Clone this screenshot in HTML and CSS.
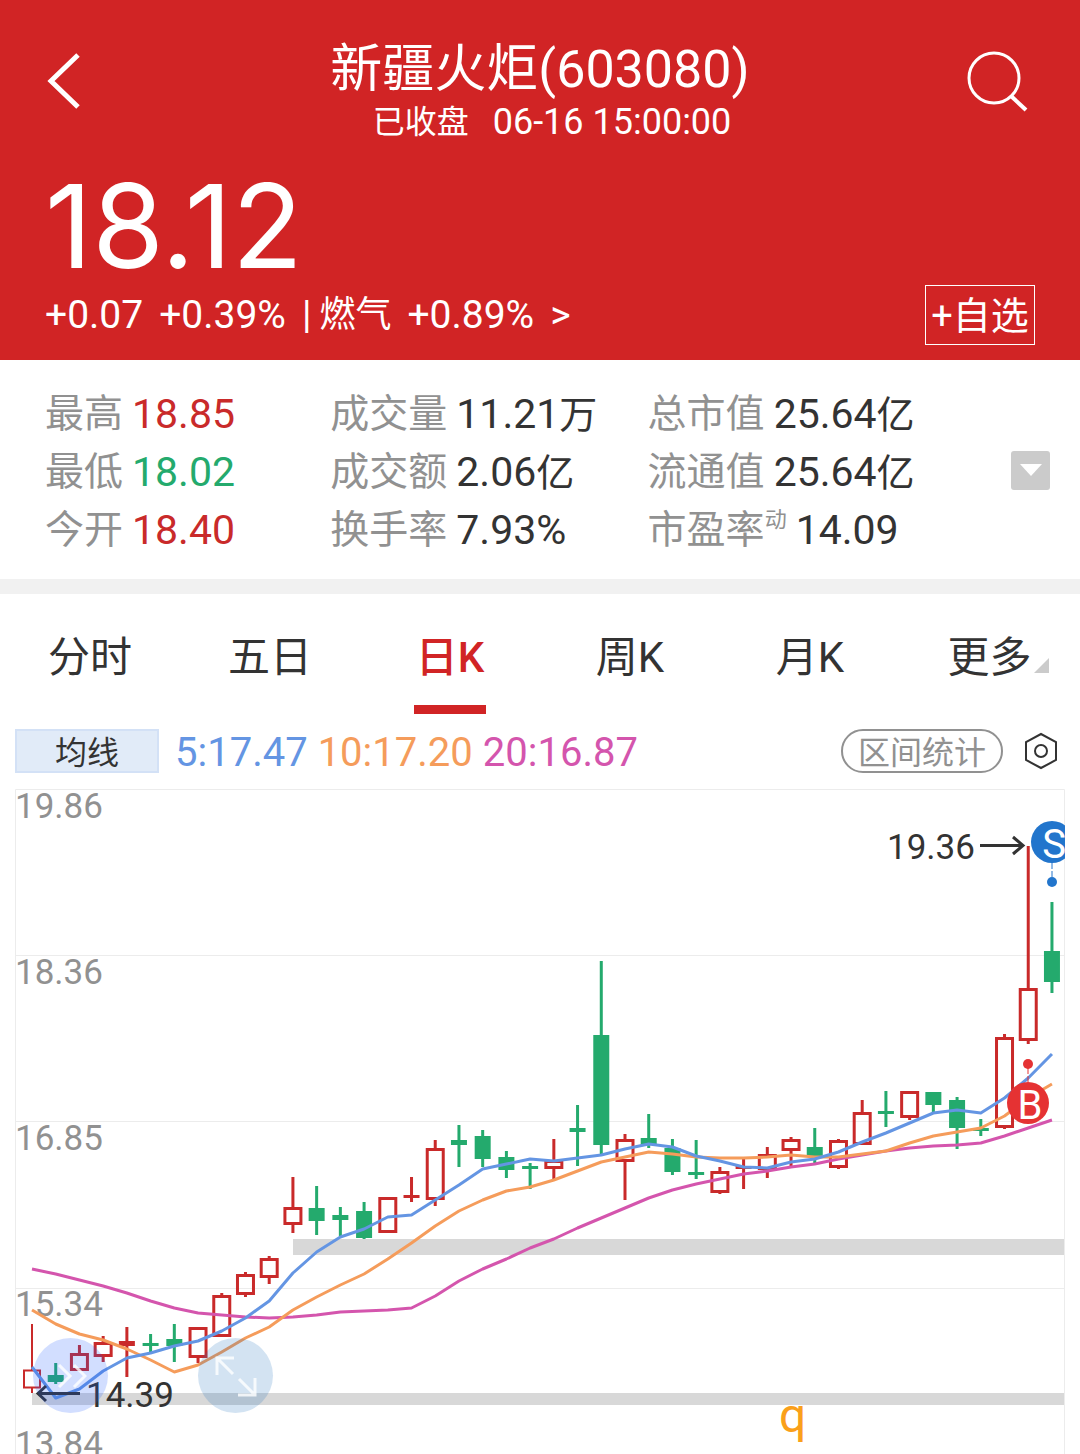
FILE: index.html
```html
<!DOCTYPE html>
<html lang="zh-CN">
<head>
    <meta charset="UTF-8">
    <meta name="viewport" content="width=device-width, initial-scale=1.0">
    <title>新疆火炬(603080)</title>
    <link rel="stylesheet" href="styles.css">
</head>
<body>

    <header class="quote-header">
        <div class="top-bar">
            <button class="icon-btn back-btn" aria-label="返回">
                <svg width="34" height="58" viewBox="0 0 34 58"><path d="M31 3 L4 29 L31 55" fill="none" stroke="#fff" stroke-width="5"/></svg>
            </button>
            <div class="title">
                <h1>新疆火炬(603080)</h1>
                <p><span>已收盘</span><span class="time">06-16 15:00:00</span></p>
            </div>
            <button class="icon-btn search-btn" aria-label="搜索">
                <svg width="62" height="62" viewBox="0 0 62 62"><g fill="none" stroke="#fff" stroke-width="3"><circle cx="27" cy="28" r="25"/><path d="M44 46 L59 60" stroke-width="4"/></g></svg>
            </button>
        </div>
        <div class="price">18.12</div>
        <div class="change-row">
            <span>+0.07</span>
            <span>+0.39%</span>
            <a class="sector" href="#"><span class="bar">|</span><span class="cn">燃气</span><span>+0.89%</span><span>&gt;</span></a>
            <button class="add-btn"><span>+</span>自选</button>
        </div>
    </header>

    <section class="stats">
        <dl class="stats-grid">
            <div><dt>最高</dt><dd class="up">18.85</dd></div>
            <div><dt>成交量</dt><dd>11.21<small>万</small></dd></div>
            <div><dt>总市值</dt><dd>25.64<small>亿</small></dd></div>
            <div><dt>最低</dt><dd class="down">18.02</dd></div>
            <div><dt>成交额</dt><dd>2.06<small>亿</small></dd></div>
            <div><dt>流通值</dt><dd>25.64<small>亿</small></dd></div>
            <div><dt>今开</dt><dd class="up">18.40</dd></div>
            <div><dt>换手率</dt><dd>7.93%</dd></div>
            <div><dt>市盈率<sup>动</sup></dt><dd>14.09</dd></div>
        </dl>
        <button class="expand-btn" aria-label="展开">
            <svg width="22" height="12" viewBox="0 0 22 12"><path d="M0 0 H22 L11 12 Z" fill="#fff"/></svg>
        </button>
    </section>

    <nav class="tabs">
        <button>分时</button>
        <button>五日</button>
        <button class="active">日K</button>
        <button>周K</button>
        <button>月K</button>
        <button class="more">更多</button>
    </nav>

    <div class="legend">
        <button class="ma-btn">均线</button>
        <span class="ma5">5:17.47</span>
        <span class="ma10">10:17.20</span>
        <span class="ma20">20:16.87</span>
        <button class="range-btn">区间统计</button>
        <button class="icon-btn setting-btn" aria-label="设置">
            <svg width="34" height="38" viewBox="0 0 34 38"><g fill="none" stroke="#333" stroke-width="2"><path d="M17 2 L32 10 V28 L17 36 L2 28 V10 Z"/><circle cx="17" cy="19" r="6"/></g></svg>
        </button>
    </div>

    <main class="chart">
        <svg class="k-line" viewBox="15 789 1050 665">
            <g class="grid">
                <path d="M15.5 1460 V789.5 H1064.5 V1460 M15 955.5 H1065 M15 1121.5 H1065 M15 1288.5 H1065"/>
            </g>
            <g class="axis">
                <text x="15" y="818">19.86</text>
                <text x="15" y="984">18.36</text>
                <text x="15" y="1150">16.85</text>
                <text x="15" y="1316">15.34</text>
                <text x="15" y="1456">13.84</text>
            </g>
            <g class="gap">
                <rect x="293" y="1239" width="771" height="16"/>
                <rect x="32" y="1393" width="1032" height="12"/>
            </g>
            <g id="candles"></g>
            <g id="lines"></g>
            <g class="mark">
                <text x="887" y="859">19.36</text>
                <path d="M980 845.5 H1023 M1013 837 L1023 845.5 L1013 854"/>
                <text x="86" y="1407">14.39</text>
                <path d="M80 1393.5 H38 M46 1386 L38 1393.5 L46 1401"/>
            </g>
            <g class="trade sell">
                <circle cx="1052" cy="842" r="21"/>
                <circle cx="1052" cy="882" r="5"/>
                <path d="M1052 863 V878"/>
                <text x="1054" y="858">S</text>
            </g>
            <g class="trade buy">
                <circle cx="1028" cy="1103" r="21"/>
                <circle cx="1028" cy="1064" r="5"/>
                <path d="M1028 1068 V1083"/>
                <text x="1030" y="1119">B</text>
            </g>
            <text class="event" x="779" y="1432">q</text>
        </svg>
        <button class="float-btn next-btn" aria-label="快进">
            <svg width="32" height="26" viewBox="0 0 32 26"><path d="M4 2 L15 13 L4 24 M19 2 L30 13 L19 24"/></svg>
        </button>
        <button class="float-btn full-btn" aria-label="全屏">
            <svg width="42" height="42" viewBox="0 0 42 42"><path d="M18 19 L3 4 M2 20 V3 H19 M24 24 L39 39 M23 40 H40 V23"/></svg>
        </button>
    </main>

    <script>
        const NS = 'http://www.w3.org/2000/svg';
        const START = 32;
        const STEP = 23.72;

        // type (r = hollow, g = solid, x = solid red), high, top, bottom, low
        const candles = [
            ['r', 1324, 1369, 1389, 1393], ['g', 1363, 1375, 1382, 1384], ['r', 1345, 1353, 1371, 1371],
            ['r', 1336, 1342, 1357, 1362], ['x', 1327, 1341, 1346, 1377], ['g', 1334, 1343, 1346, 1354],
            ['g', 1324, 1339, 1346, 1362], ['r', 1327, 1327, 1358, 1363], ['r', 1293, 1295, 1337, 1337],
            ['r', 1272, 1274, 1295, 1297], ['r', 1256, 1258, 1278, 1284], ['r', 1177, 1207, 1225, 1233],
            ['g', 1186, 1208, 1221, 1235], ['g', 1207, 1215, 1220, 1236], ['g', 1202, 1211, 1238, 1239],
            ['r', 1197, 1197, 1233, 1233], ['x', 1177, 1195, 1198, 1202], ['r', 1140, 1148, 1200, 1206],
            ['g', 1125, 1140, 1145, 1167], ['g', 1130, 1136, 1159, 1167], ['g', 1151, 1157, 1170, 1178],
            ['g', 1163, 1166, 1169, 1189], ['r', 1139, 1160, 1169, 1179], ['g', 1105, 1128, 1132, 1166],
            ['g', 961, 1035, 1145, 1155], ['r', 1134, 1139, 1162, 1200], ['g', 1114, 1138, 1145, 1148],
            ['g', 1139, 1148, 1172, 1175], ['g', 1140, 1172, 1175, 1179], ['r', 1167, 1171, 1193, 1194],
            ['x', 1158, 1166, 1169, 1189], ['r', 1147, 1154, 1170, 1178], ['r', 1137, 1139, 1151, 1166],
            ['g', 1128, 1147, 1157, 1164], ['r', 1139, 1140, 1168, 1169], ['r', 1100, 1112, 1145, 1145],
            ['g', 1091, 1111, 1114, 1127], ['r', 1091, 1091, 1118, 1120], ['g', 1092, 1092, 1105, 1113],
            ['g', 1097, 1100, 1128, 1149], ['g', 1119, 1128, 1131, 1136], ['r', 1034, 1037, 1128, 1129],
            ['r', 846, 988, 1041, 1044], ['g', 902, 951, 982, 993]
        ];

        const lines = {
            'line-ma20': [1269, 1274, 1280, 1286, 1293, 1301, 1308, 1313, 1315, 1317, 1318, 1317, 1315, 1312, 1311, 1310, 1308, 1296, 1281, 1269, 1259, 1248, 1239, 1228, 1218, 1208, 1198, 1190, 1184, 1179, 1174, 1171, 1167, 1164, 1159, 1155, 1151, 1148, 1146, 1145, 1143, 1136, 1128, 1120],
            'line-ma10': [1310, 1324, 1334, 1340, 1349, 1360, 1372, 1365, 1352, 1338, 1327, 1310, 1297, 1285, 1274, 1259, 1243, 1226, 1211, 1200, 1191, 1187, 1180, 1171, 1162, 1157, 1152, 1154, 1157, 1158, 1158, 1157, 1155, 1157, 1157, 1154, 1151, 1143, 1136, 1132, 1128, 1116, 1098, 1084],
            'line-ma5': [1367, 1398, 1389, 1371, 1358, 1353, 1346, 1341, 1331, 1318, 1301, 1273, 1252, 1237, 1229, 1217, 1215, 1200, 1185, 1169, 1164, 1159, 1161, 1158, 1155, 1149, 1144, 1147, 1156, 1161, 1167, 1168, 1162, 1159, 1152, 1142, 1133, 1123, 1113, 1110, 1113, 1098, 1078, 1054]
        };

        function addPath(parent, cls, d) {
            const path = document.createElementNS(NS, 'path');
            path.setAttribute('class', cls);
            path.setAttribute('d', d);
            document.getElementById(parent).appendChild(path);
        }

        candles.forEach(([type, high, top, bottom, low], i) => {
            const x = START + i * STEP;
            if (type === 'r') {
                addPath('candles', 'hollow', `M${x} ${high} V${top + 1} M${x} ${bottom - 1} V${low} M${x - 8} ${top + 1.5} H${x + 8} V${bottom - 1.5} H${x - 8} Z`);
            } else {
                const cls = type === 'g' ? 'solid-green' : 'solid-red';
                addPath('candles', cls, `M${x - 1.5} ${high} H${x + 1.5} V${low} H${x - 1.5} Z M${x - 8} ${top} H${x + 8} V${bottom} H${x - 8} Z`);
            }
        });

        Object.entries(lines).forEach(([cls, points]) => {
            addPath('lines', cls, 'M' + points.map((y, i) => `${START + i * STEP} ${y}`).join(' L'));
        });
    </script>

</body>
</html>
```
FILE: styles.css
```css
* {
    box-sizing: border-box;
}

body {
    margin: 0;
    background-color: #fff;
    color: #333;
    font-family: Roboto, "Noto Sans CJK SC", sans-serif;
}

button {
    margin: 0;
    padding: 0;
    border: none;
    background: none;
    color: inherit;
    font-family: inherit;
    cursor: pointer;
}

svg {
    display: block;
}

.quote-header {
    padding: 38px 45px 15px;
    background-color: #d12425;
    color: #fff;
}

.top-bar {
    display: grid;
    grid-template-columns: 70px 1fr 70px;
    align-items: start;
}

.icon-btn {
    display: flex;
    align-items: center;
    height: 86px;
}

.back-btn {
    padding-left: 2px;
}

.search-btn {
    justify-content: flex-end;
    padding-right: 6px;
}

.title {
    text-align: center;
}

.title h1 {
    margin: 0;
    font-size: 52px;
    font-weight: 400;
    line-height: 64px;
}

.title p {
    display: flex;
    justify-content: center;
    gap: 24px;
    margin: 0;
    padding-left: 24px;
    font-size: 32px;
    line-height: 40px;
}

.title .time {
    font-size: 36px;
}

.price {
    margin-top: 25px;
    font-family: Inter, sans-serif;
    font-size: 116px;
    line-height: 118px;
}

.change-row {
    display: flex;
    align-items: center;
    gap: 16px;
    height: 60px;
    font-size: 39px;
    line-height: 60px;
}

.sector {
    display: flex;
    align-items: center;
    gap: 16px;
    color: inherit;
    text-decoration: none;
}

.sector .bar {
    margin-right: -8px;
}

.sector .cn {
    font-size: 36px;
}

.add-btn {
    display: flex;
    align-items: center;
    justify-content: center;
    width: 110px;
    height: 60px;
    margin-left: auto;
    padding-top: 2px;
    border: 1px solid #fff;
    font-size: 38px;
    line-height: 58px;
}

.stats {
    display: flex;
    align-items: center;
    padding: 25px 30px 20px 45px;
    border-bottom: 15px solid #f1f1f1;
}

.stats-grid {
    flex: 1;
    display: grid;
    grid-template-columns: 285fr 317fr 363fr;
    margin: 0;
}

.stats-grid div {
    display: flex;
    align-items: center;
    gap: 9px;
    height: 58px;
    line-height: 58px;
    white-space: nowrap;
}

.stats dt {
    color: #919191;
    font-size: 39px;
}

.stats sup {
    font-size: 22px;
    line-height: 22px;
    vertical-align: 16px;
}

.stats dd {
    margin: 0;
    font-size: 41px;
}

.stats small {
    font-size: 38px;
    line-height: 38px;
}

.stats .up {
    color: #c92a2a;
}

.stats .down {
    color: #24aa6d;
}

.expand-btn {
    display: flex;
    align-items: center;
    justify-content: center;
    width: 39px;
    height: 39px;
    margin-bottom: 4px;
    border-radius: 3px;
    background-color: #cbcbcb;
}

.tabs {
    display: grid;
    grid-template-columns: repeat(6, 1fr);
    height: 120px;
}

.tabs button {
    display: flex;
    flex-direction: column;
    align-items: center;
    justify-content: space-between;
    padding-top: 34px;
    font-size: 42px;
    line-height: 60px;
}

.tabs .active {
    color: #d12425;
    font-weight: 500;
}

.tabs .active::after {
    content: "";
    width: 72px;
    height: 9px;
    background-color: #d12425;
}

.tabs .more {
    flex-direction: row;
    align-items: flex-start;
    justify-content: center;
    gap: 2px;
    padding-left: 16px;
}

.tabs .more::after {
    content: "";
    margin-top: 30px;
    border-left: 15px solid transparent;
    border-bottom: 15px solid #cbcbcb;
}

.legend {
    display: flex;
    align-items: center;
    gap: 10px;
    height: 44px;
    margin: 15px 15px 16px;
    font-size: 40px;
}

.legend span {
    padding-top: 4px;
    line-height: 44px;
}

.ma-btn {
    width: 144px;
    height: 44px;
    margin-right: 6px;
    padding-top: 4px;
    border: 2px solid #d3e1f6;
    background-color: #e1ebf8;
    font-size: 32px;
    line-height: 36px;
}

.ma5 {
    color: #6495e3;
}

.ma10 {
    color: #f59c5b;
}

.ma20 {
    color: #d455ad;
}

.range-btn {
    width: 162px;
    height: 44px;
    margin-left: auto;
    padding-top: 4px;
    border: 2px solid #919191;
    border-radius: 22px;
    color: #919191;
    font-size: 32px;
    line-height: 36px;
}

.setting-btn {
    height: 44px;
    padding: 0 7px 0 11px;
}

.chart {
    position: relative;
    margin: 0 15px;
}

.k-line {
    width: 100%;
    height: auto;
}

.grid path {
    fill: none;
    stroke: #ececec;
}

.axis text {
    fill: #919191;
    font-size: 35px;
}

.gap rect {
    fill: #d8d8d8;
}

.hollow {
    fill: none;
    stroke: #c92a2a;
    stroke-width: 3;
}

.hollow:first-child {
    stroke-width: 2;
}

.solid-green {
    fill: #24aa6d;
}

.solid-red {
    fill: #c92a2a;
}

#lines path {
    fill: none;
    stroke-width: 3;
    stroke-linejoin: round;
}

#lines .line-ma5 {
    stroke: #6495e3;
}

#lines .line-ma10 {
    stroke: #f59c5b;
}

#lines .line-ma20 {
    stroke: #d455ad;
}

.mark text {
    fill: #333;
    font-size: 35px;
}

.mark path {
    fill: none;
    stroke: #333;
    stroke-width: 3;
}

.trade text {
    fill: #fff;
    font-size: 40px;
    text-anchor: middle;
}

.trade path {
    fill: none;
    stroke-dasharray: 6 2;
}

.sell {
    fill: #2275cc;
}

.sell path {
    stroke: #2275cc;
}

.buy {
    fill: #e53233;
}

.buy path {
    stroke: #e53233;
}

.event {
    fill: #faa01a;
    font-size: 48px;
}

.float-btn {
    position: absolute;
    bottom: 41px;
    display: flex;
    align-items: center;
    justify-content: center;
    width: 75px;
    height: 75px;
    border-radius: 50%;
}

.float-btn path {
    fill: none;
    stroke: #fff;
    stroke-opacity: 0.8;
    stroke-width: 3;
}

.next-btn {
    left: 18px;
    background-color: rgba(28, 90, 255, 0.2);
}

.full-btn {
    left: 183px;
    background-color: rgba(33, 117, 190, 0.2);
}
```
